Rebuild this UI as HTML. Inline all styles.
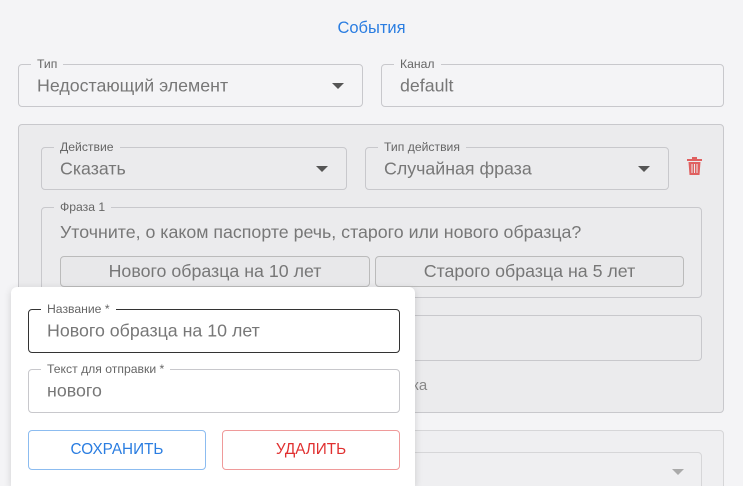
<!DOCTYPE html>
<html style="width:743px;height:486px;overflow:hidden"><head><meta charset="utf-8"><style>
*{box-sizing:border-box;margin:0;padding:0}
body{width:743px;height:486px;overflow:hidden;background:#f4f4f6;font-family:"Liberation Sans",sans-serif;position:relative;color:#777}
.a{position:absolute}
.f{position:absolute;border:1px solid #c8c8cc;border-radius:4px}
.lb{position:absolute;top:-8px;left:12px;padding:0 6px;font-size:12.2px;color:#666;line-height:14px}
.v{position:absolute;left:18px;font-size:17.8px;color:#777;top:50%;transform:translateY(-50%);white-space:nowrap}
.ar{position:absolute;right:18px;top:50%;margin-top:-3px;width:0;height:0;border-left:6px solid transparent;border-right:6px solid transparent;border-top:6px solid #555}
</style></head><body>
<div class="a" style="left:0;width:743px;top:19px;text-align:center;font-size:16.5px;color:#2a7de1">События</div>

<div class="f" style="left:18px;top:64px;width:345px;height:43px"><span class="lb" style="background:#f4f4f6">Тип</span><span class="v">Недостающий элемент</span><span class="ar"></span></div>
<div class="f" style="left:381px;top:64px;width:343px;height:43px"><span class="lb" style="background:#f4f4f6">Канал</span><span class="v">default</span></div>

<div class="a" style="left:18px;top:124px;width:706px;height:289px;background:#ebebed;border:1px solid #c8c8cc;border-radius:4px"></div>
<div class="f" style="left:41px;top:147px;width:306px;height:43px"><span class="lb" style="background:#ebebed">Действие</span><span class="v">Сказать</span><span class="ar"></span></div>
<div class="f" style="left:365px;top:147px;width:304px;height:43px"><span class="lb" style="background:#ebebed">Тип действия</span><span class="v">Случайная фраза</span><span class="ar"></span></div>
<svg class="a" style="left:687px;top:157px" width="15" height="18" viewBox="0 0 15 18"><rect x="0" y="2" width="15" height="2" fill="#e06060"/><rect x="5" y="0" width="5" height="2" fill="#e06060"/><path d="M1.5 5h12l-1 13h-10z" fill="#e06060"/><path d="M5 7v9M7.5 7v9M10 7v9" stroke="#ebebed" stroke-width="1"/></svg>

<div class="f" style="left:41px;top:207px;width:661px;height:91px"><span class="lb" style="background:#ebebed">Фраза 1</span>
<span class="a" style="left:18px;top:14px;font-size:17.8px;color:#777;white-space:nowrap">Уточните, о каком паспорте речь, старого или нового образца?</span></div>
<div class="f" style="left:60px;top:256px;width:310px;height:31px;text-align:center;line-height:29px;font-size:17.8px;background:#e8e8ea;border-color:#bbb">Нового образца на 10 лет</div>
<div class="f" style="left:375px;top:256px;width:309px;height:31px;text-align:center;line-height:29px;font-size:17.8px;background:#e8e8ea;border-color:#bbb">Старого образца на 5 лет</div>

<div class="f" style="left:380px;top:315px;width:322px;height:46px"></div>
<div class="a" style="left:412px;top:377px;font-size:15px;color:#888">ка</div>

<div class="a" style="left:380px;top:430px;width:344px;height:60px;background:#efeff1;border:1px solid #d6d6d8;border-radius:4px"></div>
<div class="f" style="left:400px;top:452px;width:302px;height:50px;border-color:#d6d6d8"></div>
<div class="a" style="left:672px;top:469px;border-left:6px solid transparent;border-right:6px solid transparent;border-top:6px solid #aaa"></div>

<div class="a" style="left:11px;top:287px;width:404px;height:199px;background:#fff;border-radius:6px 6px 0 0;box-shadow:0 2px 8px rgba(0,0,0,.15)"></div>
<div class="f" style="left:28px;top:309px;width:372px;height:44px;border-color:#333"><span class="lb" style="background:#fff">Название *</span><span class="v">Нового образца на 10 лет</span></div>
<div class="f" style="left:28px;top:369px;width:372px;height:44px"><span class="lb" style="background:#fff">Текст для отправки *</span><span class="v">нового</span></div>
<div class="f" style="left:28px;top:430px;width:178px;height:40px;border-color:#8cbcf0;text-align:center;line-height:38px;font-size:15.3px;color:#2a7de1">СОХРАНИТЬ</div>
<div class="f" style="left:222px;top:430px;width:178px;height:40px;border-color:#ef9a9a;text-align:center;line-height:38px;font-size:15.3px;color:#e03030">УДАЛИТЬ</div>
</body></html>
